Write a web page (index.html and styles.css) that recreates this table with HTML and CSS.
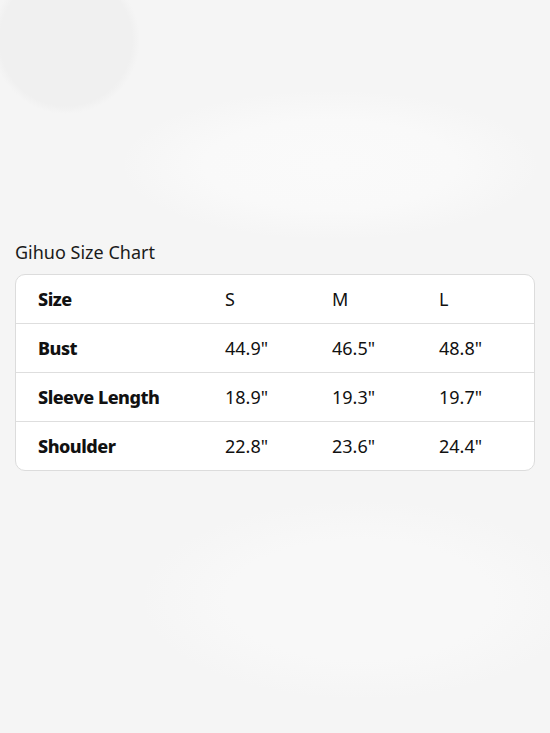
FILE: index.html
```html
<!DOCTYPE html>
<html lang="en">
<head>
<meta charset="utf-8">
<title>Gihuo Size Chart</title>
<link rel="stylesheet" href="styles.css">
</head>
<body>
<main class="page">
  <h1 class="title">Gihuo Size Chart</h1>
  <div class="card">
    <div class="row">
      <div class="label">Size</div><div class="cell">S</div><div class="cell">M</div><div class="cell">L</div>
    </div>
    <div class="row">
      <div class="label">Bust</div><div class="cell">44.9"</div><div class="cell">46.5"</div><div class="cell">48.8"</div>
    </div>
    <div class="row">
      <div class="label">Sleeve Length</div><div class="cell">18.9"</div><div class="cell">19.3"</div><div class="cell">19.7"</div>
    </div>
    <div class="row">
      <div class="label">Shoulder</div><div class="cell">22.8"</div><div class="cell">23.6"</div><div class="cell">24.4"</div>
    </div>
  </div>
</main>
</body>
</html>
```
FILE: styles.css
```css
html, body {
  margin: 0;
  padding: 0;
}
body {
  width: 550px;
  height: 733px;
  overflow: hidden;
  background-color: #f5f5f5;
  background-image:
    radial-gradient(circle at 66px 40px, #f0f0f0 0, #f0f0f0 66px, rgba(245,245,245,0) 74px),
    radial-gradient(ellipse 210px 75px at 330px 165px, #fafafa 0, #f9f9f9 60%, rgba(245,245,245,0) 100%),
    radial-gradient(ellipse 220px 100px at 360px 600px, #f8f8f8 0, #f8f8f8 60%, rgba(245,245,245,0) 100%);
  background-repeat: no-repeat;
  font-family: "Noto Sans", "Liberation Sans", sans-serif;
  color: #111;
}
.page {
  padding: 240px 15px 0 15px;
}
.title {
  margin: 0 0 10px 0;
  font-size: 18px;
  font-weight: 400;
  line-height: 24px;
  color: #1a1a1a;
}
.card {
  background: #fff;
  border: 1px solid #dcdcdc;
  border-radius: 10px;
  overflow: hidden;
}
.row {
  display: grid;
  grid-template-columns: 187px 107px 107px 1fr;
  align-items: center;
  height: 48px;
  padding-left: 22px;
  border-bottom: 1px solid #dedede;
  font-size: 18px;
}
.row:last-child {
  border-bottom: none;
}
.label {
  font-weight: 800;
  letter-spacing: -0.5px;
}
.cell {
  font-weight: 400;
}
```
